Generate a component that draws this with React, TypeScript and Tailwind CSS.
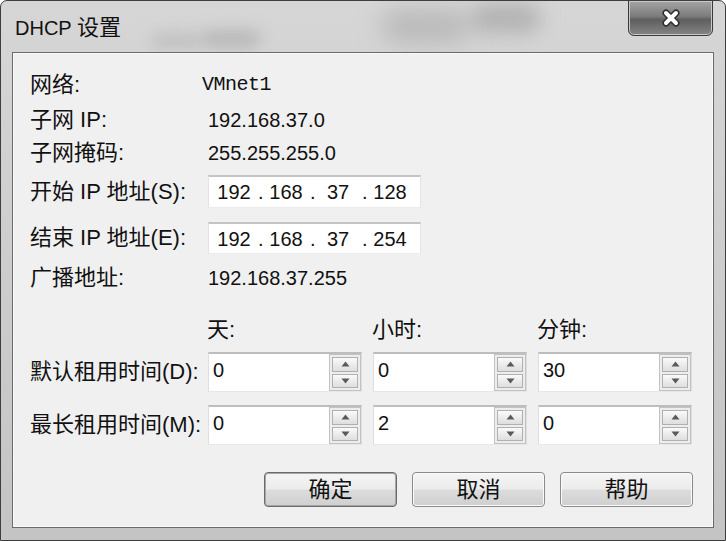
import React from "react";

const font = "font-['Liberation_Sans','Noto_Sans_CJK_SC',sans-serif]";

const InfoRow: React.FC<{ label: string; className?: string; children: React.ReactNode }> = ({
  label,
  className,
  children,
}) => (
  <div className={`flex items-center ${className ?? ""}`}>
    <div className="w-[178px] shrink-0 text-[22px] leading-none">{label}</div>
    {children}
  </div>
);

const IpBox: React.FC<{ parts: string[] }> = ({ parts }) => (
  <div className="flex h-full w-[213px] items-center border-t-2 border-t-[#c4c4c4] border-x border-x-[#e4e4e4] border-b border-b-[#ececec] bg-white pl-[1px] text-[20px]">
    {parts.map((p, i) => (
      <React.Fragment key={i}>
        {i > 0 && <span className="w-[4px] text-center">.</span>}
        <span className="w-[48px] text-center">{p}</span>
      </React.Fragment>
    ))}
  </div>
);

const Arrow: React.FC<{ up?: boolean }> = ({ up }) => (
  <svg width="9" height="6" viewBox="0 0 9 6">
    <path d={up ? "M0.5 5.5 L4.5 0.5 L8.5 5.5 Z" : "M0.5 0.5 L4.5 5.5 L8.5 0.5 Z"} fill="#5a5a5a" />
  </svg>
);

const SpinBox: React.FC<{ value: string }> = ({ value }) => (
  <div className="flex h-[40px] w-[154px] border-t-2 border-t-[#bdbdbd] border-x border-x-[#dedede] border-b border-b-[#e8e8e8] bg-white">
    <div className="flex-1 pl-[4px] pt-[6px] text-[20px] leading-none">{value}</div>
    <div className="flex w-[32px] flex-col gap-[2px] border border-[#c2c2c2] bg-[#ededed] p-[2px]">
      <div className="flex flex-1 items-center justify-center border border-[#b0b0b0] bg-gradient-to-b from-[#fafafa] to-[#dedede]">
        <Arrow up />
      </div>
      <div className="flex flex-1 items-center justify-center border border-[#b0b0b0] bg-gradient-to-b from-[#fafafa] to-[#dedede]">
        <Arrow />
      </div>
    </div>
  </div>
);

const DialogButton: React.FC<{ label: string; primary?: boolean }> = ({ label, primary }) => (
  <button
    className={`flex h-[35px] w-[133px] items-center justify-center rounded-[4px] border text-[22px] leading-none text-[#111] ${
      primary ? "border-[#6a6a6a] shadow-[inset_0_0_0_1px_#a8a8a8]" : "border-[#8a8a8a] shadow-[inset_0_0_0_1px_#fbfbfb]"
    } bg-[linear-gradient(to_bottom,#f4f4f4_0%,#ececec_48%,#dcdcdc_52%,#cfcfcf_100%)]`}
  >
    {label}
  </button>
);

export default function App() {
  return (
    <div className={`h-[541px] w-[726px] bg-white text-[#111] ${font}`}>
      <div className="relative flex h-full w-full flex-col overflow-hidden rounded-t-[7px] border border-[#3e3e3e] bg-[linear-gradient(to_bottom,#d6d6d6,#cbcbcb_60%,#c4c4c4)]">
        {/* glass blur spots */}
        <div className="pointer-events-none absolute left-[380px] top-[8px] h-[34px] w-[90px] rounded-full bg-[#a8a8a8] opacity-60 blur-[12px]" />
        <div className="pointer-events-none absolute left-[470px] top-[2px] h-[30px] w-[70px] rounded-full bg-[#9c9c9c] opacity-60 blur-[10px]" />
        <div className="pointer-events-none absolute left-[200px] top-[30px] h-[16px] w-[60px] rounded-full bg-[#a0a0a0] opacity-60 blur-[8px]" />
        <div className="pointer-events-none absolute left-[150px] top-[34px] h-[12px] w-[50px] rounded-full bg-[#a8a8a8] opacity-60 blur-[8px]" />

        {/* title bar */}
        <div className="relative flex h-[51px] shrink-0 items-start pl-[14px] pt-[16px]">
          <span className="text-[20px] leading-none text-[#111]">
            DHCP <span className="text-[22px]">设置</span>
          </span>
          <div className="absolute left-[627px] top-[-1px] flex h-[36px] w-[85px] items-center justify-center rounded-b-[6px] border border-[#3a3a3a] bg-[linear-gradient(to_bottom,#a4a4a4,#7c7c7c_45%,#5e5e5e_55%,#858585)] shadow-[inset_0_0_0_1px_#c8c8c8]">
            <svg width="22" height="18" viewBox="0 0 22 18">
              <path d="M6 4 L16 14 M16 4 L6 14" stroke="#2e2e2e" strokeWidth="7" strokeLinecap="round" />
              <path d="M6 4 L16 14 M16 4 L6 14" stroke="#ffffff" strokeWidth="4" strokeLinecap="round" />
            </svg>
          </div>
        </div>

        {/* client area */}
        <div className="relative mx-[11px] flex h-[476px] shrink-0 flex-col border border-[#6a6a6a] bg-[#f0f0f0] pl-[17px] pr-[20px] pt-[17px] shadow-[inset_0_0_0_1px_#fafafa]">
          <InfoRow label="网络:" className="h-[30px]">
            <span className="-ml-[6px] font-['Liberation_Mono',monospace] text-[20px] tracking-[-0.5px]">VMnet1</span>
          </InfoRow>
          <InfoRow label="子网 IP:" className="mt-[5px] h-[30px]">
            <span className="text-[20px]">192.168.37.0</span>
          </InfoRow>
          <InfoRow label="子网掩码:" className="mt-[3px] h-[30px]">
            <span className="text-[20px]">255.255.255.0</span>
          </InfoRow>
          <InfoRow label="开始 IP 地址(S):" className="mt-[7px] h-[33px]">
            <IpBox parts={["192", "168", "37", "128"]} />
          </InfoRow>
          <InfoRow label="结束 IP 地址(E):" className="mt-[14px] h-[32px]">
            <IpBox parts={["192", "168", "37", "254"]} />
          </InfoRow>
          <InfoRow label="广播地址:" className="mt-[9px] h-[30px]">
            <span className="text-[20px]">192.168.37.255</span>
          </InfoRow>

          <div className="mt-[22px] flex h-[30px] items-center pl-[178px] text-[22px] leading-none">
            <div className="-ml-[1px] w-[154px]">天:</div>
            <div className="ml-[11px] w-[154px]">小时:</div>
            <div className="ml-[11px] w-[154px]">分钟:</div>
          </div>

          <div className="mt-[7px] flex h-[40px] items-center">
            <div className="w-[178px] shrink-0 text-[22px] leading-none">默认租用时间(D):</div>
            <div className="flex gap-[11px]">
              <SpinBox value="0" />
              <SpinBox value="0" />
              <SpinBox value="30" />
            </div>
          </div>
          <div className="mt-[13px] flex h-[40px] items-center">
            <div className="w-[178px] shrink-0 text-[22px] leading-none">最长租用时间(M):</div>
            <div className="flex gap-[11px]">
              <SpinBox value="0" />
              <SpinBox value="2" />
              <SpinBox value="0" />
            </div>
          </div>

          <div className="mt-[27px] flex justify-end gap-[15px]">
            <DialogButton label="确定" primary />
            <DialogButton label="取消" />
            <DialogButton label="帮助" />
          </div>
        </div>

        <div className="flex-1" />
      </div>
    </div>
  );
}
